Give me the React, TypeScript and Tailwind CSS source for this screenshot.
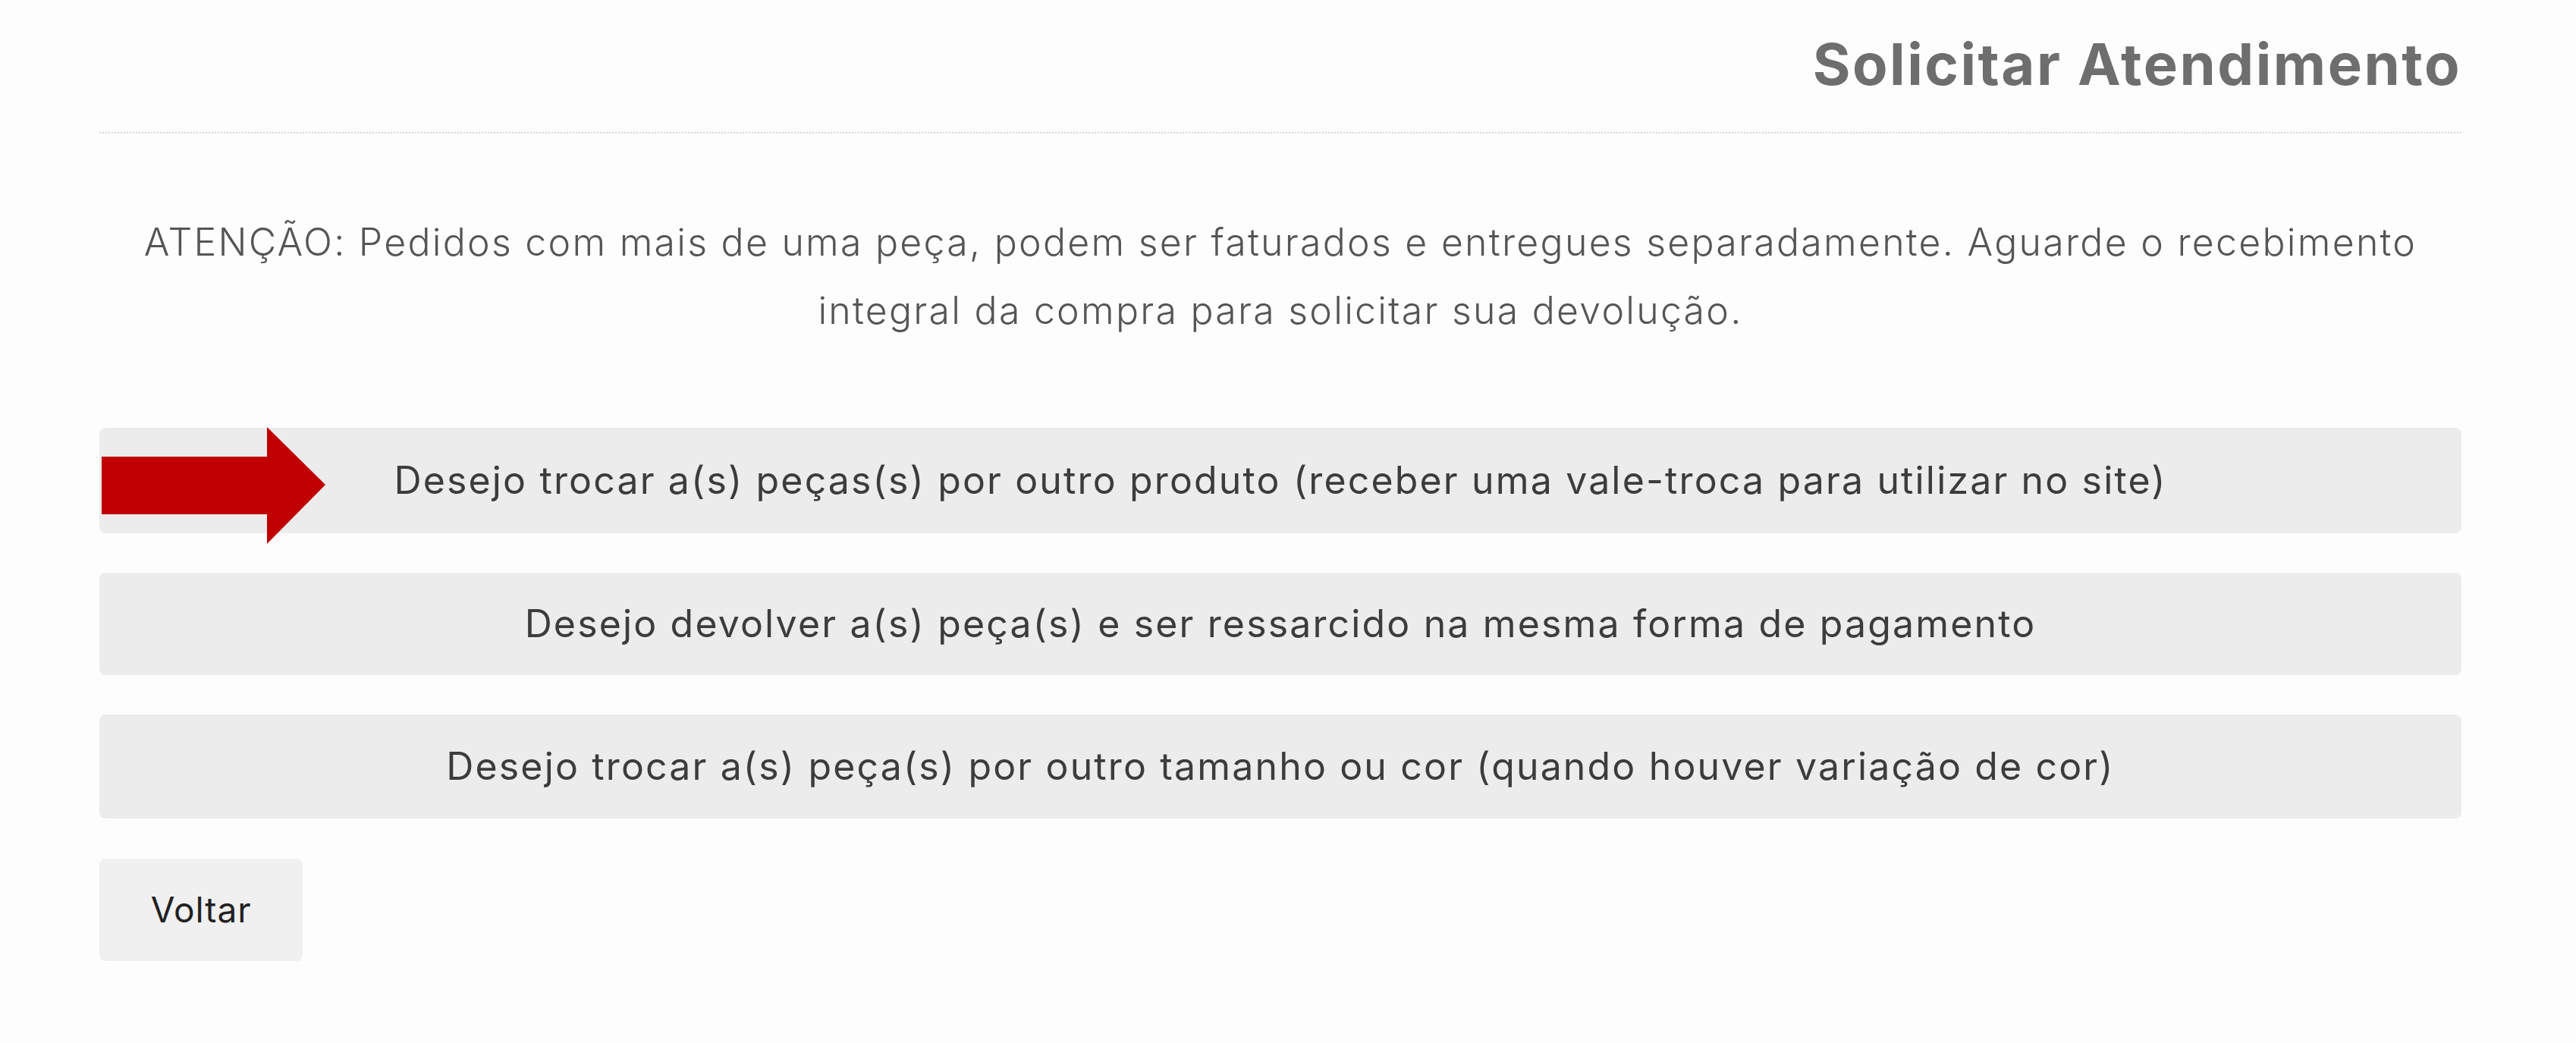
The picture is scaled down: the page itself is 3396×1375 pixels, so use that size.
import React from "react";

const font = { fontFamily: "Inter, 'Noto Sans', sans-serif" };

export default function App() {
  return (
    <div className="min-h-[1375px] w-full bg-[#fdfdfd]" style={font}>
      <div className="ml-[131px] w-[3114px] flex flex-col">
        <div className="h-[174px] flex items-start justify-end pt-[38px]">
          <h1 className="text-[76px] leading-[92px] font-bold text-[#6e6e6e] tracking-[0.033em]">
            Solicitar Atendimento
          </h1>
        </div>
        <div className="border-t-2 border-dotted border-[#d6d6d6]" />
        <p className="mt-[98px] text-center text-[50px] leading-[90px] font-light text-[#555555] tracking-[0.045em]">
          ATENÇÃO: Pedidos com mais de uma peça, podem ser faturados e entregues separadamente. Aguarde o recebimento
          <br />
          integral da compra para solicitar sua devolução.
        </p>
        <div className="mt-[110px] flex flex-col gap-[52px]">
          <div className="relative">
            <button className="w-full h-[139px] rounded-[8px] bg-[#ececec] text-[50px] text-[#3c3c3c] text-center tracking-[0.043em]">
              Desejo trocar a(s) peças(s) por outro produto (receber uma vale-troca para utilizar no site)
            </button>
            <svg
              className="absolute left-[3px] top-[-1px]"
              width="295"
              height="154"
              viewBox="0 0 295 154"
            >
              <polygon points="0,39 218,39 218,0 295,76 218,154 218,115 0,115" fill="#c00000" />
            </svg>
          </div>
          <button className="w-full h-[135px] rounded-[8px] bg-[#ececec] text-[50px] text-[#3c3c3c] text-center tracking-[0.043em]">
            Desejo devolver a(s) peça(s) e ser ressarcido na mesma forma de pagamento
          </button>
          <button className="w-full h-[137px] rounded-[8px] bg-[#ececec] text-[50px] text-[#3c3c3c] text-center tracking-[0.043em]">
            Desejo trocar a(s) peça(s) por outro tamanho ou cor (quando houver variação de cor)
          </button>
        </div>
        <div className="mt-[53px]">
          <button className="w-[268px] h-[135px] rounded-[8px] bg-[#f0f0f0] text-[46px] text-[#222222] tracking-[0.02em]">
            Voltar
          </button>
        </div>
      </div>
    </div>
  );
}
